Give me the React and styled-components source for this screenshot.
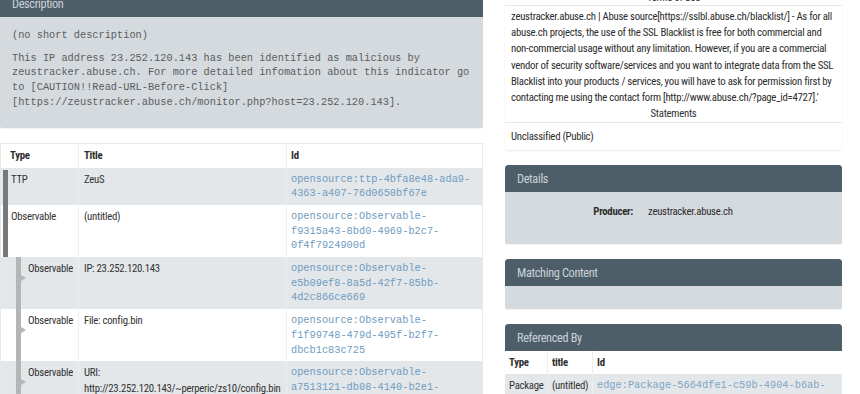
import React from 'react';
import styled, { createGlobalStyle, css } from 'styled-components';

const SANS = `"Roboto Condensed", "Liberation Sans Narrow", Roboto, "Liberation Sans", sans-serif`;
const MONO = `"Liberation Mono", "Courier New", monospace`;

const Global = createGlobalStyle`
  html, body { margin: 0; padding: 0; background: #ffffff; }
  body {
    overflow: hidden;
    font-family: ${SANS};
    font-size: 10.8px;
    letter-spacing: -0.28px;
    color: #333;
  }
  * { box-sizing: border-box; }
`;

const Page = styled.div`
  display: grid;
  grid-template-columns: 483px 337px;
  column-gap: 22px;
  align-items: start;
  margin-top: -10px;
  width: 860px;
`;

const Column = styled.div`
  display: flex;
  flex-direction: column;
  gap: ${p => p.$gap || 15}px;
`;

const Panel = styled.section`
  border-radius: 3px;
  box-shadow: 0 1px 1px rgba(0, 0, 0, 0.06);
  background: #d5dadf;
  overflow: hidden;
`;

const PanelHeader = styled.div`
  height: 27px;
  display: flex;
  align-items: center;
  padding: 0 12px;
  background: #4e5e69;
  color: #c9d2d8;
  font-size: 12.3px;
  letter-spacing: -0.35px;
  border-radius: 3px 3px 0 0;
`;

const PanelBody = styled.div`
  background: #d5dadf;
  padding: ${p => p.$pad || '12px'};
  min-height: ${p => p.$min || 0}px;
`;

const MonoPara = styled.p`
  margin: 0 0 8px;
  font-family: ${MONO};
  font-size: 10.3px;
  letter-spacing: 0;
  line-height: 14.7px;
  color: #5c5c5c;
`;

/* ---------- left table ---------- */
const Table = styled.div`
  border: 1px solid #e6e8ea;
  background: #fff;
`;

const Row = styled.div`
  display: grid;
  grid-template-columns: ${p => p.$cols};
  background: ${p => (p.$shade ? '#e3e7ea' : '#ffffff')};
`;

const Cell = styled.div`
  padding: 4px ${p => p.$padX || 5}px;
  line-height: 16px;
  border-left: ${p => (p.$first ? 'none' : '1px solid #eceef0')};
  ${p => p.$head && css`font-weight: 700; color: #2e2e2e;`}
`;

const IdCell = styled.div`
  padding: 4px 4px;
  border-left: 1px solid #eceef0;
  font-family: ${MONO};
  font-size: 10.3px;
  letter-spacing: 0;
  line-height: 14.7px;
  color: #6f9bc0;
`;

const TypeCell = styled.div`
  display: flex;
  align-items: stretch;
  padding-left: ${p => (p.$level ? 15 : 2)}px;
`;

const Bar = styled.span`
  position: relative;
  flex: none;
  width: 5px;
  margin-top: ${p => (p.$offset ? 2 : 0)}px;
  background: ${p => (p.$level ? '#b3b5b7' : '#777a7c')};
  ${p => p.$level && css`
    &::after {
      content: '';
      position: absolute;
      left: 5px;
      top: 18px;
      border-left: 5px solid #b3b5b7;
      border-top: 3px solid transparent;
      border-bottom: 3px solid transparent;
    }
  `}
`;

const TypeText = styled.span`
  padding: 4px 0 4px ${p => (p.$level ? 7 : 3)}px;
  line-height: 16px;
  white-space: nowrap;
`;

/* ---------- right column ---------- */
const TermsPanel = styled.section`
  background: #fff;
  border-radius: 3px;
  box-shadow: 0 1px 2px rgba(0, 0, 0, 0.08);
`;

const SubHeading = styled.div`
  text-align: center;
  line-height: 15px;
  padding: ${p => p.$pad || '0'};
  border-bottom: 1px solid #e4e6e8;
  color: #333;
`;

const TermsText = styled.p`
  margin: 0;
  padding: ${p => p.$pad || '3px 4px 0 6px'};
  line-height: 16.2px;
  color: #2e2e2e;
`;

const NoWrap = styled.span`
  white-space: nowrap;
`;

const DefList = styled.dl`
  display: grid;
  grid-template-columns: 128px 1fr;
  column-gap: 15px;
  margin: 0;
  line-height: 16px;
`;

const Term = styled.dt`
  text-align: right;
  font-weight: 700;
  color: #2e2e2e;
`;

const Def = styled.dd`
  margin: 0;
  color: #2e2e2e;
`;

const RefTable = styled.div`
  background: #fff;
`;

const RefCell = styled.div`
  padding: 4px 4px;
  line-height: 15px;
  white-space: nowrap;
  border-left: ${p => (p.$first ? 'none' : '1px solid #eceef0')};
  ${p => p.$head && css`font-weight: 700; color: #2e2e2e;`}
  ${p => p.$mono && css`
    font-family: ${MONO};
    font-size: 10.3px;
    letter-spacing: 0;
    color: #7ea5c6;
  `}
`;

const rows = [
  { type: 'TTP', level: 0, title: 'ZeuS', id: 'opensource:ttp-4bfa8e48-ada9-4363-a407-76d0650bf67e', offset: true },
  { type: 'Observable', level: 0, title: '(untitled)', id: 'opensource:Observable-f9315a43-8bd0-4969-b2c7-0f4f7924900d' },
  { type: 'Observable', level: 1, title: 'IP: 23.252.120.143', id: 'opensource:Observable-e5b09ef8-8a5d-42f7-85bb-4d2c866ce669' },
  { type: 'Observable', level: 1, title: 'File: config.bin', id: 'opensource:Observable-f1f99748-479d-495f-b2f7-dbcb1c83c725' },
  { type: 'Observable', level: 1, title: 'URI: http://23.252.120.143/~perperic/zs10/config.bin', id: 'opensource:Observable-a7513121-db08-4140-b2e1-6c2a0d93e17f' },
];

const LEFT_COLS = '77px 208px 1fr';
const REF_COLS = '42px 45px 1fr';

export default function App() {
  return (
    <>
      <Global />
      <Page>
        <Column $gap={15}>
          <Panel>
            <PanelHeader>Description</PanelHeader>
            <PanelBody $pad="11px 8px 10px 12px">
              <MonoPara>(no short description)</MonoPara>
              <MonoPara>
                This IP address 23.252.120.143 has been identified as malicious by zeustracker.abuse.ch. For more detailed infomation about this indicator go to [CAUTION!!Read-URL-Before-Click] [https://zeustracker.abuse.ch/monitor.php?host=23.252.120.143].
              </MonoPara>
            </PanelBody>
          </Panel>

          <Table>
            <Row $cols={LEFT_COLS}>
              <Cell $first $head $padX={9}>Type</Cell>
              <Cell $head>Title</Cell>
              <Cell $head $padX={4}>Id</Cell>
            </Row>
            {rows.map((r, i) => (
              <Row key={i} $cols={LEFT_COLS} $shade={i % 2 === 0}>
                <TypeCell $level={r.level}>
                  <Bar $level={r.level} $offset={r.offset} />
                  <TypeText $level={r.level}>{r.type}</TypeText>
                </TypeCell>
                <Cell>{r.title}</Cell>
                <IdCell>{r.id}</IdCell>
              </Row>
            ))}
          </Table>
        </Column>

        <Column $gap={15}>
          <TermsPanel>
            <SubHeading>Terms of Use</SubHeading>
            <TermsText>
              zeustracker.abuse.ch | Abuse source[https://sslbl.abuse.ch/blacklist/] - As for all abuse.ch projects, the use of the SSL Blacklist is free for both commercial and <NoWrap>non-commercial</NoWrap> usage without any limitation. However, if you are a commercial vendor of security software/services and you want to integrate data from the SSL Blacklist into your products / services, you will have to ask for permission first by contacting me using the contact form [http://www.abuse.ch/?page_id=4727].'
            </TermsText>
            <SubHeading $pad="0 0 1px">Statements</SubHeading>
            <TermsText $pad="6px 6px 5px">Unclassified (Public)</TermsText>
          </TermsPanel>

          <Panel>
            <PanelHeader>Details</PanelHeader>
            <PanelBody $pad="12px 0 24px">
              <DefList>
                <Term>Producer:</Term>
                <Def>zeustracker.abuse.ch</Def>
              </DefList>
            </PanelBody>
          </Panel>

          <Panel>
            <PanelHeader>Matching Content</PanelHeader>
            <PanelBody $pad="0" $min={23} />
          </Panel>

          <Panel>
            <PanelHeader>Referenced By</PanelHeader>
            <RefTable>
              <Row $cols={REF_COLS}>
                <RefCell $first $head>Type</RefCell>
                <RefCell $head>title</RefCell>
                <RefCell $head>Id</RefCell>
              </Row>
              <Row $cols={REF_COLS} $shade>
                <RefCell $first>Package</RefCell>
                <RefCell>(untitled)</RefCell>
                <RefCell $mono>edge:Package-5664dfe1-c59b-4904-b6ab-</RefCell>
              </Row>
            </RefTable>
          </Panel>
        </Column>
      </Page>
    </>
  );
}
